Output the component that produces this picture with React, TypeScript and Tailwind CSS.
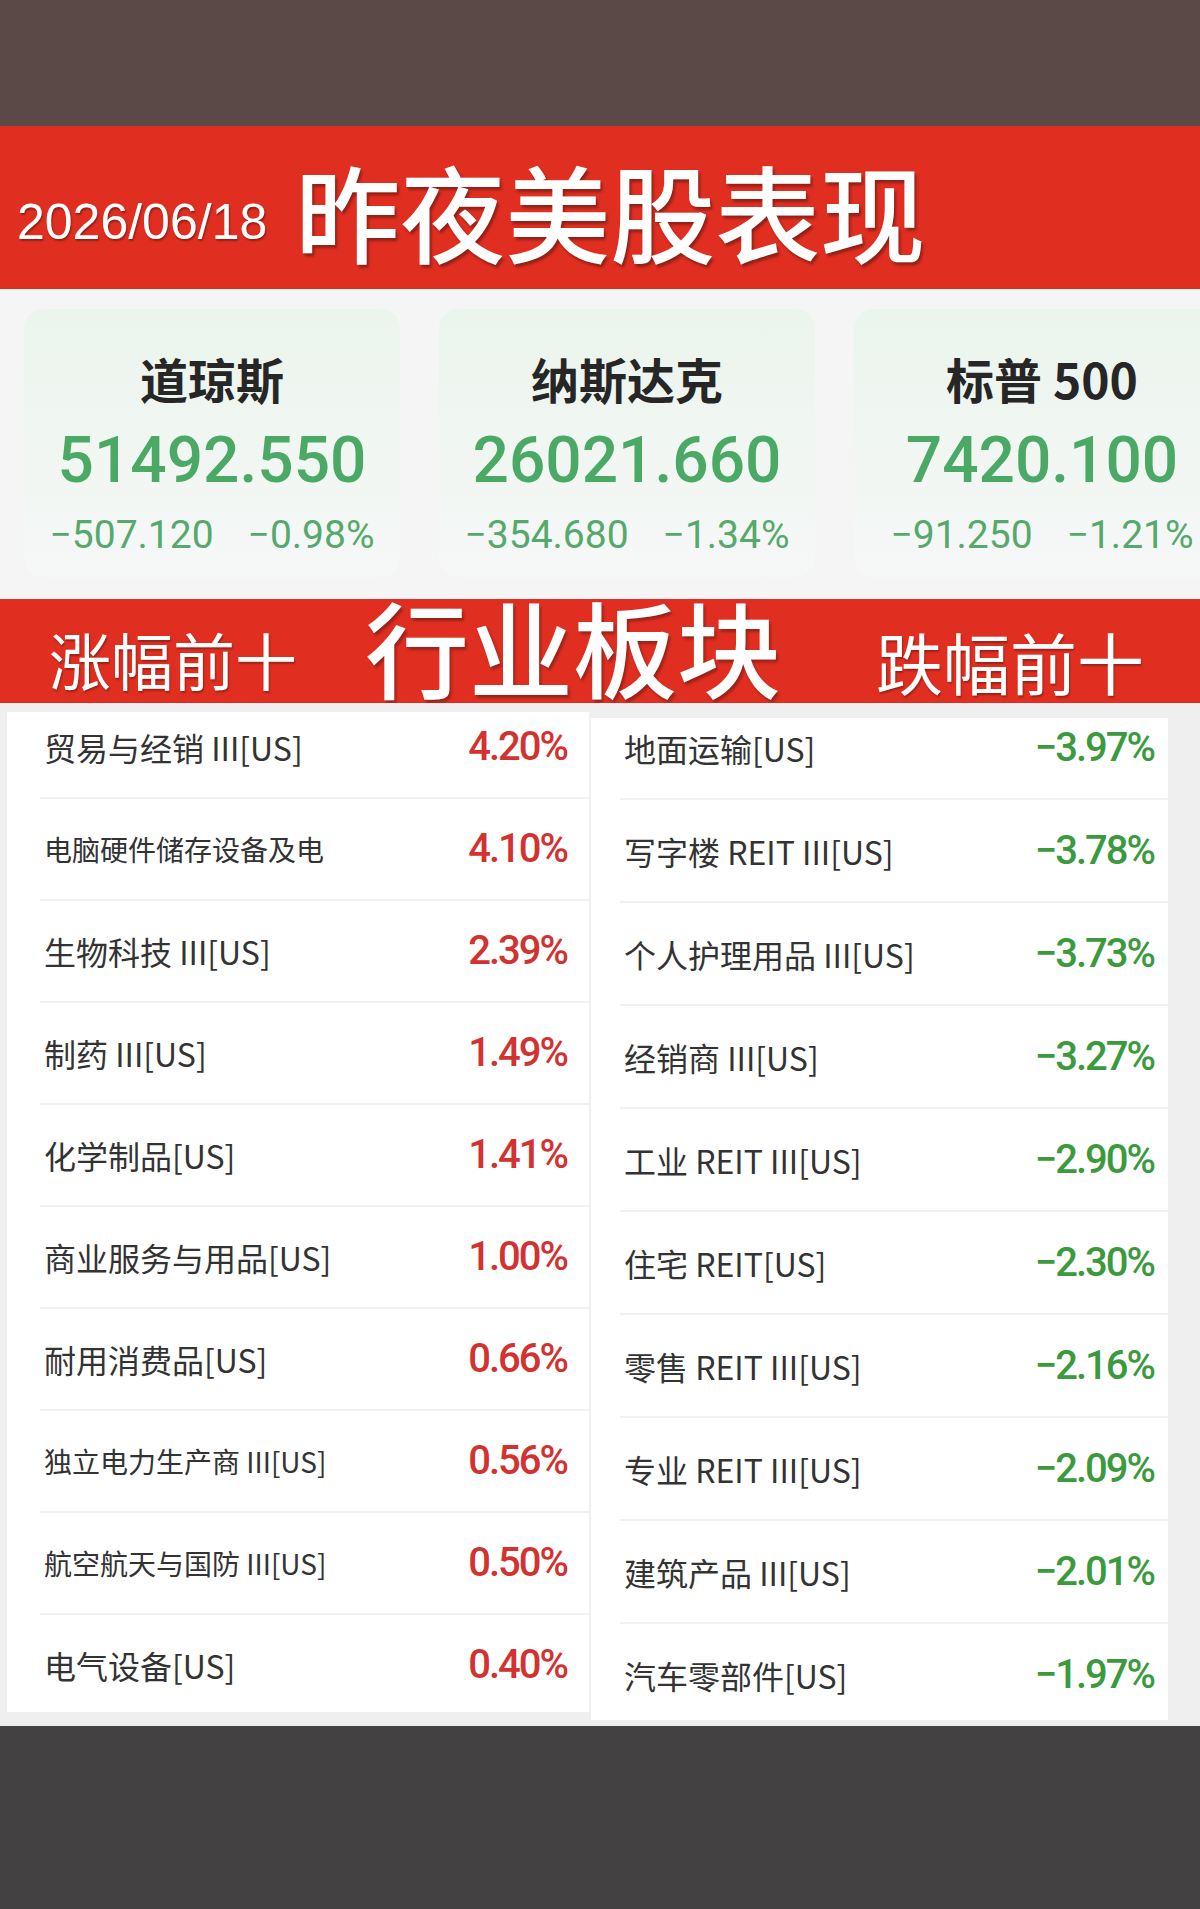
import React from "react";

const CJK = '"Noto Sans CJK SC", "Noto Sans", sans-serif';
const NUM = 'Roboto, "Noto Sans", sans-serif';

type Idx = { name: string; value: string; chg: string; pct: string };
const indices: Idx[] = [
  { name: "道琼斯", value: "51492.550", chg: "−507.120", pct: "−0.98%" },
  { name: "纳斯达克", value: "26021.660", chg: "−354.680", pct: "−1.34%" },
  { name: "标普 500", value: "7420.100", chg: "−91.250", pct: "−1.21%" },
];

type Row = { label: string; pct: string; small?: boolean };
const gainers: Row[] = [
  { label: "贸易与经销 III[US]", pct: "4.20%" },
  { label: "电脑硬件储存设备及电", pct: "4.10%", small: true },
  { label: "生物科技 III[US]", pct: "2.39%" },
  { label: "制药 III[US]", pct: "1.49%" },
  { label: "化学制品[US]", pct: "1.41%" },
  { label: "商业服务与用品[US]", pct: "1.00%" },
  { label: "耐用消费品[US]", pct: "0.66%" },
  { label: "独立电力生产商 III[US]", pct: "0.56%", small: true },
  { label: "航空航天与国防 III[US]", pct: "0.50%", small: true },
  { label: "电气设备[US]", pct: "0.40%" },
];
const losers: Row[] = [
  { label: "地面运输[US]", pct: "−3.97%" },
  { label: "写字楼 REIT III[US]", pct: "−3.78%" },
  { label: "个人护理用品 III[US]", pct: "−3.73%" },
  { label: "经销商 III[US]", pct: "−3.27%" },
  { label: "工业 REIT III[US]", pct: "−2.90%" },
  { label: "住宅 REIT[US]", pct: "−2.30%" },
  { label: "零售 REIT III[US]", pct: "−2.16%" },
  { label: "专业 REIT III[US]", pct: "−2.09%" },
  { label: "建筑产品 III[US]", pct: "−2.01%" },
  { label: "汽车零部件[US]", pct: "−1.97%" },
];

function Card({ d }: { d: Idx }) {
  return (
    <div className="w-[376px] h-[268px] shrink-0 rounded-[20px] bg-gradient-to-b from-[#ebf4ed] to-[#f6f8f7] flex flex-col items-center">
      <div
        className="mt-[45px] text-[48px] leading-[48px] font-bold text-[#262626]"
        style={{ fontFamily: CJK }}
      >
        {d.name}
      </div>
      <div
        className="mt-[27px] text-[64px] leading-[64px] font-medium text-[#4aa964]"
        style={{ fontFamily: NUM }}
      >
        {d.value}
      </div>
      <div
        className="mt-[22px] flex gap-[34px] text-[39px] leading-[40px] text-[#56a96c]"
        style={{ fontFamily: NUM }}
      >
        <span>{d.chg}</span>
        <span>{d.pct}</span>
      </div>
    </div>
  );
}

function Table({
  rows,
  color,
  rowH,
  offset,
  ml,
  pr,
}: {
  rows: Row[];
  color: string;
  rowH: string;
  offset: string;
  ml: string;
  pr: string;
}) {
  return (
    <div className={`flex flex-col ${offset}`}>
      {rows.map((r, i) => (
        <div
          key={i}
          className={`${rowH} ${ml} ${pr} flex items-center justify-between border-b-2 border-[#f1f1f1]`}
        >
          <span
            className={`pl-[4px] text-[#333333] ${r.small ? "text-[28px]" : "text-[32px]"} leading-none`}
            style={{ fontFamily: CJK }}
          >
            {r.label}
          </span>
          <span
            className={`${color} text-[40px] leading-none font-medium tracking-[-2px]`}
            style={{ fontFamily: NUM }}
          >
            {r.pct}
          </span>
        </div>
      ))}
    </div>
  );
}

export default function App() {
  return (
    <div className="w-[1200px] h-[1909px] flex flex-col overflow-hidden bg-[#434141]">
      <div className="h-[126px] shrink-0 bg-[#5b4948]" />
      <div className="h-[163px] shrink-0 bg-[#e02f21] flex items-center pt-[20px]">
        <span
          className="ml-[17px] mt-[8px] text-[50px] leading-none text-white [text-shadow:1px_2px_2px_rgba(0,0,0,0.35)]"
          style={{ fontFamily: '"Liberation Sans", Arial, sans-serif' }}
        >
          2026/06/18
        </span>
        <span
          className="ml-[28px] mt-[-16px] text-[105px] leading-none font-medium text-white [text-shadow:2px_3px_3px_rgba(0,0,0,0.35)]"
          style={{ fontFamily: CJK }}
        >
          昨夜美股表现
        </span>
      </div>
      <div className="h-[310px] shrink-0 bg-[#f4f5f4] pt-[20px] pl-[24px] flex gap-[39px] overflow-hidden">
        {indices.map((d, i) => (
          <Card key={i} d={d} />
        ))}
      </div>
      <div className="h-[104px] shrink-0 bg-[#e02f21] flex items-start text-white" style={{ fontFamily: CJK }}>
        <span className="ml-[49px] mt-[29px] text-[62px] leading-none [text-shadow:1px_2px_2px_rgba(0,0,0,0.3)]">
          涨幅前十
        </span>
        <span className="ml-[68px] mt-[-5px] text-[104px] leading-none font-medium [text-shadow:2px_3px_3px_rgba(0,0,0,0.3)]">
          行业板块
        </span>
        <span className="ml-[95px] mt-[28px] text-[67px] leading-none [text-shadow:1px_2px_2px_rgba(0,0,0,0.3)]">
          跌幅前十
        </span>
      </div>
      <div className="h-[1023px] shrink-0 bg-[#efefef] flex items-start pt-[9px] pl-[7px]">
        <div className="w-[582px] h-[1000px] bg-white overflow-hidden">
          <Table
            rows={gainers}
            color="text-[#d23230]"
            rowH="h-[102px]"
            offset="mt-[-15px]"
            ml="ml-[33px]"
            pr="pr-[22px]"
          />
        </div>
        <div className="ml-[2px] mt-[6px] w-[577px] h-[1002px] bg-white overflow-hidden">
          <Table
            rows={losers}
            color="text-[#3c9a3e]"
            rowH="h-[103px]"
            offset="mt-[-21px]"
            ml="ml-[29px]"
            pr="pr-[14px]"
          />
        </div>
      </div>
      <div className="flex-1 bg-[#434141]" />
    </div>
  );
}
